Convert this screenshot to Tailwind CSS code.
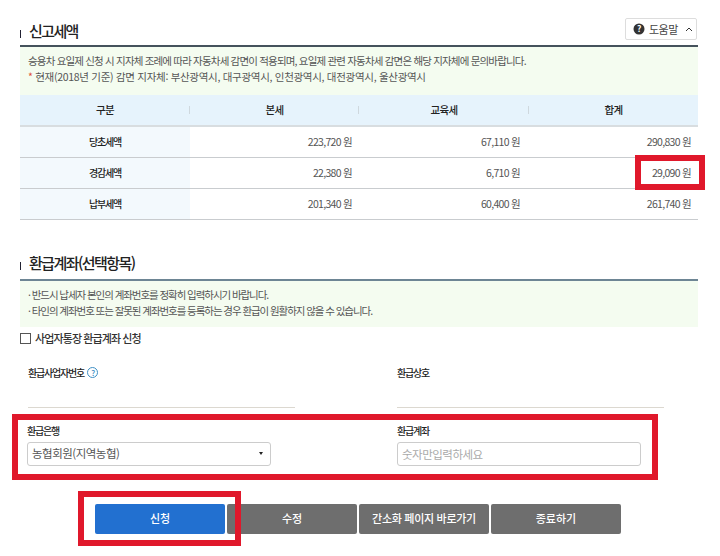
<!DOCTYPE html>
<html lang="ko">
<head>
    <meta charset="UTF-8">
    <title>신고세액</title>
    <script src="https://cdn.jsdelivr.net/npm/@tailwindcss/browser@4"></script>
</head>
<body class="bg-white font-['Noto_Sans_CJK_KR','Noto_Sans',sans-serif] text-[#333] overflow-hidden">
<div class="relative w-[720px] h-[556px] pl-[20px]">
    <div class="w-[678px]">
        <!-- 신고세액 -->
        <div class="flex items-end justify-between h-[47px] border-b-2 border-[#45525c] pb-[5px]">
            <h2 class="flex items-center text-[15px] font-medium text-[#222] tracking-[-1.6px] leading-[20px] translate-y-px">
                <span class="w-px h-[8px] bg-[#223] mr-[8px] mt-[6px]"></span>신고세액
            </h2>
            <button class="flex items-center w-[72px] h-[22px] border border-[#ddd] rounded-[2px] pl-[7px] text-[11px] text-[#444] tracking-[-0.5px] mr-px">
                <svg class="w-[12px] h-[12px] mr-[4px]" viewBox="0 0 12 12"><circle cx="6" cy="6" r="5.5" fill="#333"/><text x="6" y="9" font-size="8.5" font-weight="700" fill="#fff" text-anchor="middle">?</text></svg>
                도움말
                <svg class="w-[8px] h-[5px] ml-[7px]" viewBox="0 0 8 5"><path d="M1 4l3-3 3 3" fill="none" stroke="#333" stroke-width="1"/></svg>
            </button>
        </div>
        <div class="bg-[#f4fcf0] h-[48px] pt-[6px] pl-[8px] text-[10.5px] leading-[16px] text-[#555]">
            <p class="tracking-[-0.82px]">승용차 요일제 신청 시 지자체 조례에 따라 자동차세 감면이 적용되며, 요일제 관련 자동차세 감면은 해당 지자체에 문의바랍니다.</p>
            <p class="tracking-[-0.3px]"><span class="text-[#e0503c]">*</span> 현재(2018년 기준) 감면 지자체: 부산광역시, 대구광역시, 인천광역시, 대전광역시, 울산광역시</p>
        </div>
        <table class="w-full table-fixed border-collapse text-[10.5px] tracking-[-0.7px]">
            <colgroup><col class="w-[170px]"><col class="w-[169px]"><col class="w-[170px]"><col class="w-[169px]"></colgroup>
            <thead>
                <tr class="h-[31px] bg-[#e6f3fc] border-b-2 border-[#d8dde0] text-[#222] font-medium">
                    <th class="font-medium relative">구분<span class="absolute right-0 top-[11px] w-px h-[8px] bg-[#cfd8de]"></span></th>
                    <th class="font-medium relative">본세<span class="absolute right-0 top-[11px] w-px h-[8px] bg-[#cfd8de]"></span></th>
                    <th class="font-medium relative">교육세<span class="absolute right-0 top-[11px] w-px h-[8px] bg-[#cfd8de]"></span></th>
                    <th class="font-medium">합계</th>
                </tr>
            </thead>
            <tbody class="text-[#555]">
                <tr class="h-[31px] border-b border-[#c9cccf]">
                    <td class="bg-[#f3f9fd] text-center text-[10px] tracking-[-1.2px] font-medium text-[#222]">당초세액</td>
                    <td class="text-right pr-[7px]">223,720 원</td>
                    <td class="text-right pr-[9px]">67,110 원</td>
                    <td class="text-right pr-[7px]">290,830 원</td>
                </tr>
                <tr class="h-[31px] border-b border-[#c9cccf]">
                    <td class="bg-[#f3f9fd] text-center text-[10px] tracking-[-1.2px] font-medium text-[#222]">경감세액</td>
                    <td class="text-right pr-[7px]">22,380 원</td>
                    <td class="text-right pr-[9px]">6,710 원</td>
                    <td class="text-right pr-[7px]">29,090 원</td>
                </tr>
                <tr class="h-[31px] border-b border-[#c9cccf]">
                    <td class="bg-[#f3f9fd] text-center text-[10px] tracking-[-1.2px] font-medium text-[#222]">납부세액</td>
                    <td class="text-right pr-[7px]">201,340 원</td>
                    <td class="text-right pr-[9px]">60,400 원</td>
                    <td class="text-right pr-[7px]">261,740 원</td>
                </tr>
            </tbody>
        </table>

        <!-- 환급계좌 -->
        <div class="flex items-end h-[61px] border-b-2 border-[#6d8594] pb-[6px]">
            <h2 class="flex items-center text-[15px] font-medium text-[#222] tracking-[-1.55px] leading-[20px]">
                <span class="w-px h-[8px] bg-[#223] mr-[8px] mt-[6px]"></span>환급계좌(선택항목)
            </h2>
        </div>
        <div class="bg-[#f4fcf0] h-[46px] pt-[6px] pl-[8px] text-[10.5px] leading-[16px] text-[#555] tracking-[-1.07px]">
            <p>· 반드시 납세자 본인의 계좌번호를 정확히 입력하시기 바랍니다.</p>
            <p>· 타인의 계좌번호 또는 잘못된 계좌번호를 등록하는 경우 환급이 원활하지 않을 수 있습니다.</p>
        </div>
        <label class="flex items-center h-[24px] text-[11px] font-medium text-[#333] tracking-[-0.9px]">
            <span class="w-[11px] h-[11px] border border-[#555] mr-[4px]"></span>사업자통장 환급계좌 신청
        </label>

        <div class="flex pl-[8px] mt-[10px]">
            <div class="w-[267px] h-[47px] border-b border-[#dcd8d0] mr-[102px] pt-[2px]">
                <div class="flex items-center h-[20px] text-[10px] font-medium text-[#222] tracking-[-1.2px]">
                    환급사업자번호
                    <svg class="w-[11px] h-[11px] ml-[3px]" viewBox="0 0 11 11"><circle cx="5.5" cy="5.5" r="5" fill="none" stroke="#3f8fc4"/><text x="5.5" y="8.5" font-size="8" fill="#3f8fc4" text-anchor="middle">?</text></svg>
                </div>
            </div>
            <div class="w-[267px] h-[47px] border-b border-[#dcd8d0] pt-[2px]">
                <div class="flex items-center h-[20px] text-[10px] font-medium text-[#222] tracking-[-1.2px]">환급상호</div>
            </div>
        </div>

        <div class="flex w-[646px] h-[66px] -ml-[8px] mt-[6px] border-[6px] border-[#e0182b] pl-[9px] pt-[3px]">
            <div class="w-[244px] mr-[126px]">
                <div class="h-[19px] text-[10px] leading-[15px] font-medium text-[#222] tracking-[-1.2px]">환급은행</div>
                <div class="flex items-center justify-between h-[24px] border border-[#ccc] rounded-[3px] pl-[4px] pr-[7px] text-[11.5px] tracking-[-0.5px] text-[#555]">
                    농협회원(지역농협)
                    <span class="w-0 h-0 border-x-[2px] border-t-[3px] border-x-transparent border-t-[#222]"></span>
                </div>
            </div>
            <div class="w-[244px]">
                <div class="h-[19px] text-[10px] leading-[15px] font-medium text-[#222] tracking-[-1.2px]">환급계좌</div>
                <input class="block w-full h-[24px] border border-[#ccc] rounded-[3px] pl-[4px] text-[11.5px] tracking-[-0.5px] placeholder:text-[#aaa] outline-none" placeholder="숫자만입력하세요">
            </div>
        </div>

        <div class="flex gap-[2px] ml-[75px] mt-[24px] text-[11px] font-medium text-white">
            <button class="w-[130px] h-[30px] rounded-[2px] bg-[#2270d0]">신청</button>
            <button class="w-[130px] h-[30px] rounded-[2px] bg-[#6e6e6e]">수정</button>
            <button class="w-[130px] h-[30px] rounded-[2px] bg-[#6e6e6e] tracking-[-0.3px]">간소화 페이지 바로가기</button>
            <button class="w-[130px] h-[30px] rounded-[2px] bg-[#6e6e6e]">종료하기</button>
        </div>
    </div>

    <!-- annotation boxes drawn over the page -->
    <div class="absolute left-[635px] top-[155px] w-[70px] h-[35px] border-[6px] border-[#e0182b]"></div>
    <div class="absolute left-[78px] top-[491px] w-[163px] h-[55px] border-[6px] border-[#e0182b]"></div>
</div>
</body>
</html>
